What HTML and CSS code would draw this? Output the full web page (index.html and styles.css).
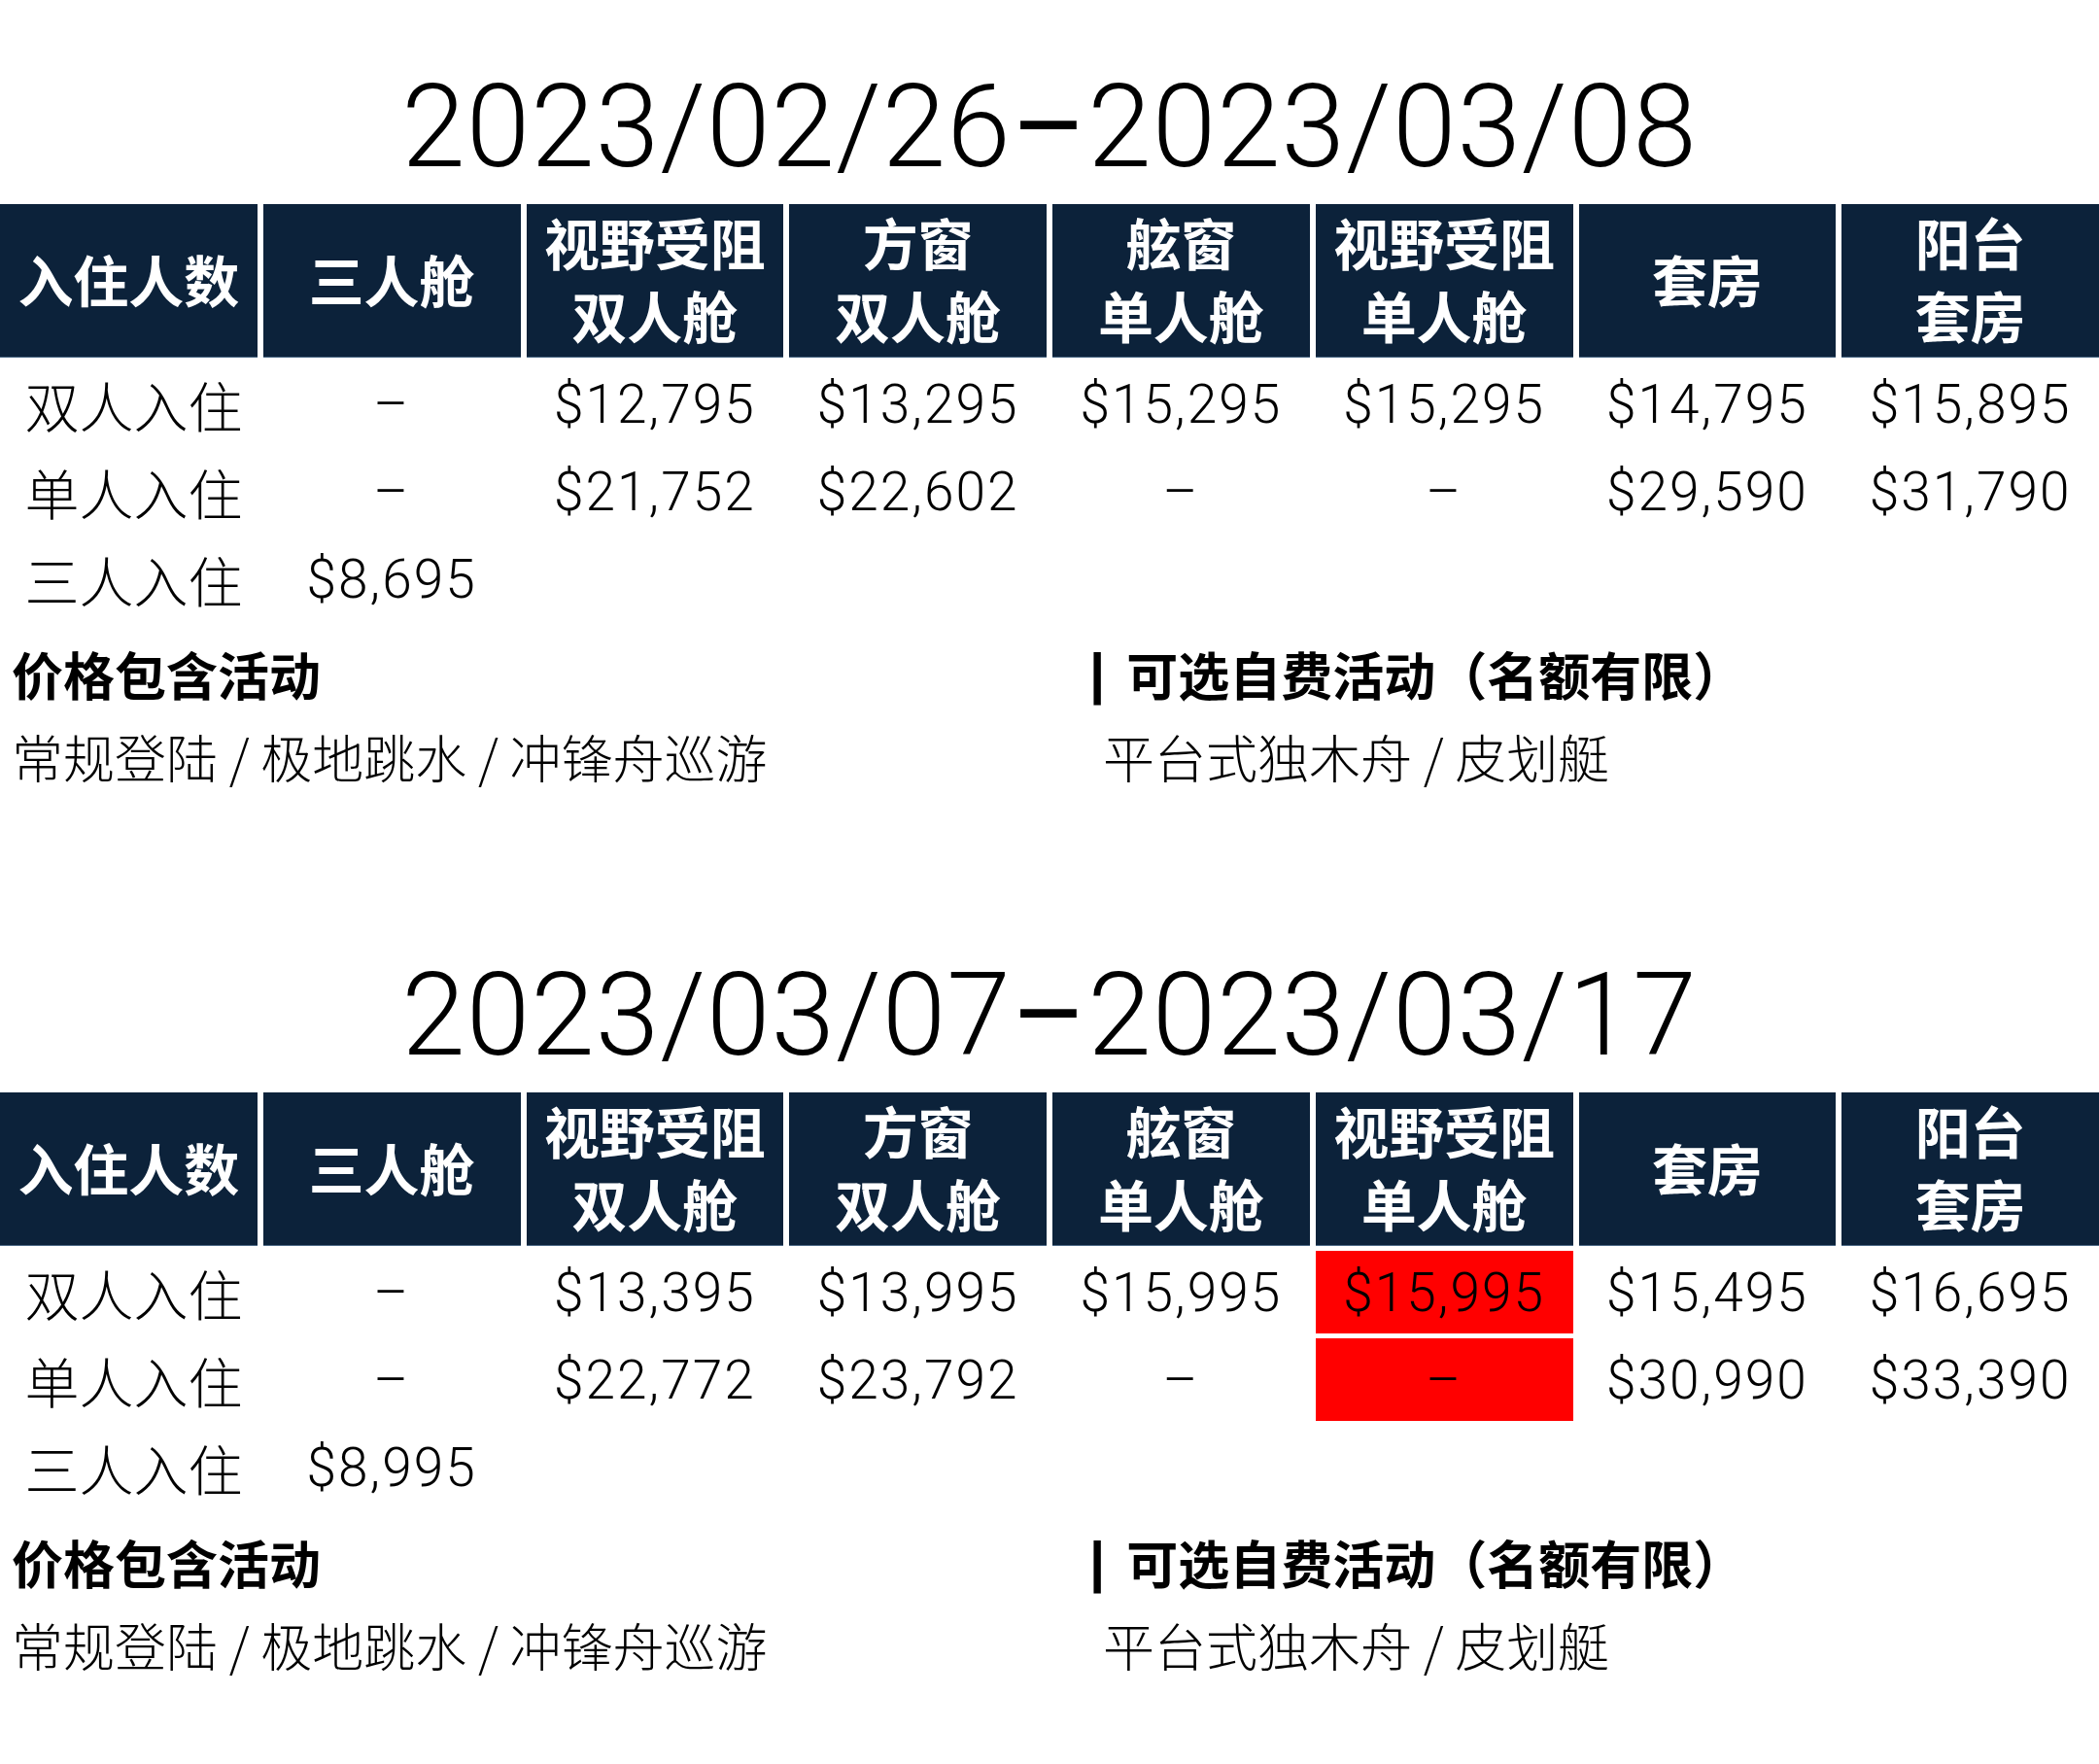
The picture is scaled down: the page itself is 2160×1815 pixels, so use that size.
FILE: index.html
```html
<!DOCTYPE html>
<html lang="zh-CN">
<head>
<meta charset="utf-8">
<title>价格表</title>
<link rel="stylesheet" href="styles.css">
</head>
<body>
<section class="period">
  <h1 class="title">2023/02/26<span class="dash">–</span>2023/03/08</h1>
  <div class="grid">
    <div class="th">入住人数</div>
    <div class="th">三人舱</div>
    <div class="th">视野受阻<br>双人舱</div>
    <div class="th">方窗<br>双人舱</div>
    <div class="th">舷窗<br>单人舱</div>
    <div class="th">视野受阻<br>单人舱</div>
    <div class="th">套房</div>
    <div class="th">阳台<br>套房</div>

    <div class="td label">双人入住</div>
    <div class="td">–</div>
    <div class="td">$12,795</div>
    <div class="td">$13,295</div>
    <div class="td">$15,295</div>
    <div class="td">$15,295</div>
    <div class="td">$14,795</div>
    <div class="td">$15,895</div>

    <div class="td label">单人入住</div>
    <div class="td">–</div>
    <div class="td">$21,752</div>
    <div class="td">$22,602</div>
    <div class="td">–</div>
    <div class="td">–</div>
    <div class="td">$29,590</div>
    <div class="td">$31,790</div>

    <div class="td label">三人入住</div>
    <div class="td">$8,695</div>
  </div>
  <div class="acts">
    <div class="act">
      <h2>价格包含活动</h2>
      <p>常规登陆 / 极地跳水 / 冲锋舟巡游</p>
    </div>
    <div class="act right">
      <h2><span class="bar">|</span>可选自费活动（名额有限）</h2>
      <p>平台式独木舟 / 皮划艇</p>
    </div>
  </div>
</section>

<section class="period">
  <h1 class="title">2023/03/07<span class="dash">–</span>2023/03/17</h1>
  <div class="grid">
    <div class="th">入住人数</div>
    <div class="th">三人舱</div>
    <div class="th">视野受阻<br>双人舱</div>
    <div class="th">方窗<br>双人舱</div>
    <div class="th">舷窗<br>单人舱</div>
    <div class="th">视野受阻<br>单人舱</div>
    <div class="th">套房</div>
    <div class="th">阳台<br>套房</div>

    <div class="td label">双人入住</div>
    <div class="td">–</div>
    <div class="td">$13,395</div>
    <div class="td">$13,995</div>
    <div class="td">$15,995</div>
    <div class="td hot">$15,995</div>
    <div class="td">$15,495</div>
    <div class="td">$16,695</div>

    <div class="td label">单人入住</div>
    <div class="td">–</div>
    <div class="td">$22,772</div>
    <div class="td">$23,792</div>
    <div class="td">–</div>
    <div class="td hot">–</div>
    <div class="td">$30,990</div>
    <div class="td">$33,390</div>

    <div class="td label">三人入住</div>
    <div class="td">$8,995</div>
  </div>
  <div class="acts">
    <div class="act">
      <h2>价格包含活动</h2>
      <p>常规登陆 / 极地跳水 / 冲锋舟巡游</p>
    </div>
    <div class="act right">
      <h2><span class="bar">|</span>可选自费活动（名额有限）</h2>
      <p>平台式独木舟 / 皮划艇</p>
    </div>
  </div>
</section>
</body>
</html>
```
FILE: styles.css
```css
* {
  box-sizing: border-box;
  margin: 0;
  padding: 0;
}

html, body {
  background: #ffffff;
}

body {
  color: #000000;
  font-family: "Roboto", "Noto Sans CJK SC", sans-serif;
}

.period {
  height: 914px;
  padding-top: 72px;
}

.title {
  font-size: 118px;
  font-weight: 300;
  line-height: 118px;
  text-align: center;
  letter-spacing: 1px;
  margin-bottom: 20px;
}

.title .dash {
  font-weight: 400;
}

.grid {
  display: grid;
  grid-template-columns: repeat(8, 1fr);
  grid-template-rows: 158px repeat(3, 85px);
  column-gap: 6px;
  row-gap: 5px;
}

.th {
  background: #0c223a;
  box-shadow: inset 0 -1px 0 #4d6a86;
  color: #ffffff;
  font-family: "Noto Sans CJK SC", sans-serif;
  font-weight: 700;
  font-size: 57px;
  line-height: 75px;
  padding-bottom: 6px;
  display: flex;
  align-items: center;
  justify-content: center;
  text-align: center;
}

.td {
  display: flex;
  align-items: center;
  justify-content: center;
  font-size: 55px;
  font-weight: 300;
  letter-spacing: 2px;
}

.label {
  font-family: "Noto Sans CJK SC", sans-serif;
  font-size: 56px;
  letter-spacing: 0;
  padding-left: 10px;
}

.hot {
  background: #ff0000;
}

.acts {
  display: grid;
  grid-template-columns: 1109px 1fr;
  padding-left: 12px;
  margin-top: 23px;
}

.acts h2 {
  font-family: "Noto Sans CJK SC", sans-serif;
  font-size: 53px;
  font-weight: 700;
  line-height: 64px;
  height: 64px;
}

.acts p {
  font-family: "Noto Sans CJK SC", sans-serif;
  font-size: 53px;
  font-weight: 300;
  line-height: 64px;
  margin-top: 21px;
}

.bar {
  font-family: "Liberation Sans", sans-serif;
  font-weight: 700;
  font-size: 58px;
  line-height: 0;
  vertical-align: 3px;
  margin-right: 22px;
}

.right p {
  padding-left: 14px;
}
```
